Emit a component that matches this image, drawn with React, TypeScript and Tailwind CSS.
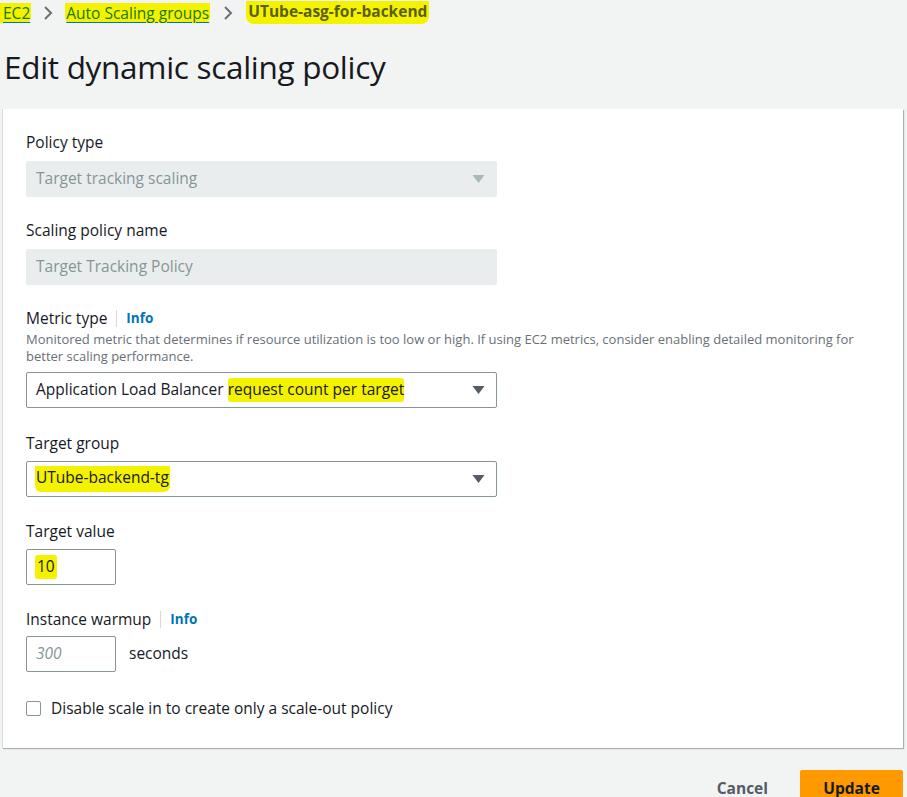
import React from "react";

const Caret = ({ color = "#545b64" }: { color?: string }) => (
  <svg width="13" height="10" viewBox="0 0 13 10">
    <path d="M0.5 1 L12.5 1 L6.5 9 Z" fill={color} />
  </svg>
);

const Chevron = () => (
  <svg width="12" height="16" viewBox="0 0 12 16">
    <path d="M3 2 L9 8 L3 14" fill="none" stroke="#687078" strokeWidth="2" />
  </svg>
);

export default function App() {
  return (
    <div
      className="w-[907px] h-[797px] overflow-hidden bg-[#f2f3f3] text-[#16191f]"
      style={{ fontFamily: '"Open Sans", "Noto Sans", sans-serif' }}
    >
      {/* breadcrumb */}
      <div className="flex items-center h-[25px] text-[15.5px] leading-[20px]">
        <span className="bg-[#f5f200] pl-[3px] pr-[1px] rounded-br-[6px] text-[#13780f] underline decoration-[#0073bb] underline-offset-[3px]">
          EC2
        </span>
        <span className="mx-[11px] flex items-center">
          <Chevron />
        </span>
        <span className="bg-[#f5f200] px-[1px] rounded-b-[6px] text-[#13780f] underline decoration-[#0073bb] underline-offset-[3px]">
          Auto Scaling groups
        </span>
        <span className="mx-[12px] flex items-center">
          <Chevron />
        </span>
        <span className="bg-[#f5f200] px-[2px] pb-[3px] rounded-b-[8px] font-bold text-[#5a5f10]">
          UTube-asg-for-backend
        </span>
      </div>

      {/* title */}
      <h1 className="pl-[4px] pt-[22px] h-[84px] text-[31.5px] leading-[40px] text-[#16191f] tracking-[-0.3px]">
        Edit dynamic scaling policy
      </h1>

      {/* card */}
      <div className="ml-[2px] w-[901px] h-[639px] bg-white border-l border-[#d5dbdb] shadow-[1px_1px_1px_0_rgba(0,22,40,0.3)] pt-[22px] pl-[23px] text-[15.5px]">
        {/* Policy type */}
        <div className="leading-[22px]">Policy type</div>
        <div className="mt-[8px] w-[471px] h-[36px] rounded-[2px] bg-[#eaeded] flex items-center justify-between pl-[10px] pr-[12px] text-[#879596]">
          <span>Target tracking scaling</span>
          <Caret color="#aab7b8" />
        </div>

        {/* Scaling policy name */}
        <div className="mt-[22px] leading-[22px]">Scaling policy name</div>
        <div className="mt-[8px] w-[471px] h-[36px] rounded-[2px] bg-[#eaeded] flex items-center pl-[10px] text-[#879596]">
          Target Tracking Policy
        </div>

        {/* Metric type */}
        <div className="mt-[22px] flex items-center leading-[22px]">
          <span className="font-stretch-[90%]">Metric type</span>
          <span className="mx-[9px] w-px h-[17px] bg-[#d5dbdb]" />
          <span className="text-[#0073bb] font-bold text-[13.5px] font-stretch-[90%]">Info</span>
        </div>
        <div className="mt-[2px] w-[850px] text-[13px] leading-[17px] text-[#687078] font-stretch-[91%]">
          Monitored metric that determines if resource utilization is too low or high. If using EC2 metrics, consider enabling detailed monitoring for better scaling performance.
        </div>
        <div className="mt-[7px] w-[471px] h-[36px] rounded-[2px] border border-[#879596] flex items-center justify-between pl-[9px] pr-[11px] font-stretch-[94%]">
          <span>
            Application Load Balancer{" "}
            <span className="bg-[#f5f200] rounded-[3px] pb-[2px]">request count per target</span>
          </span>
          <Caret />
        </div>

        {/* Target group */}
        <div className="mt-[24px] leading-[22px]">Target group</div>
        <div className="mt-[7px] w-[471px] h-[36px] rounded-[2px] border border-[#879596] flex items-center justify-between pl-[8px] pr-[11px]">
          <span className="bg-[#f5f200] px-[1px] rounded-b-[6px] pb-[2px]">UTube-backend-tg</span>
          <Caret />
        </div>

        {/* Target value */}
        <div className="mt-[23px] leading-[22px]">Target value</div>
        <div className="mt-[7px] w-[90px] h-[36px] rounded-[2px] border border-[#879596] flex items-center pl-[8px]">
          <span className="bg-[#f5f200] px-[2px] rounded-[3px]">10</span>
        </div>

        {/* Instance warmup */}
        <div className="mt-[23px] flex items-center leading-[22px]">
          <span>Instance warmup</span>
          <span className="mx-[9px] w-px h-[17px] bg-[#d5dbdb]" />
          <span className="text-[#0073bb] font-bold text-[13.5px]">Info</span>
        </div>
        <div className="mt-[6px] flex items-center">
          <div className="w-[90px] h-[36px] rounded-[2px] border border-[#879596] flex items-center pl-[9px] italic text-[#879596]">
            300
          </div>
          <span className="ml-[13px]">seconds</span>
        </div>

        {/* checkbox */}
        <div className="mt-[25px] flex items-center">
          <span className="w-[15px] h-[15px] border border-[#879596] rounded-[2px] bg-white" />
          <span className="ml-[10px] leading-[22px]">
            Disable scale in to create only a scale-out policy
          </span>
        </div>
      </div>

      {/* buttons */}
      <div className="flex justify-end items-start mt-[22px] pr-[4px]">
        <span className="mt-[7px] mr-[32px] text-[15.5px] font-bold text-[#545b64]">Cancel</span>
        <span className="w-[103px] h-[40px] bg-[#ff9900] rounded-[2px] flex items-start justify-center pt-[7px] text-[15.5px] font-bold text-[#16191f]">
          Update
        </span>
      </div>
    </div>
  );
}
